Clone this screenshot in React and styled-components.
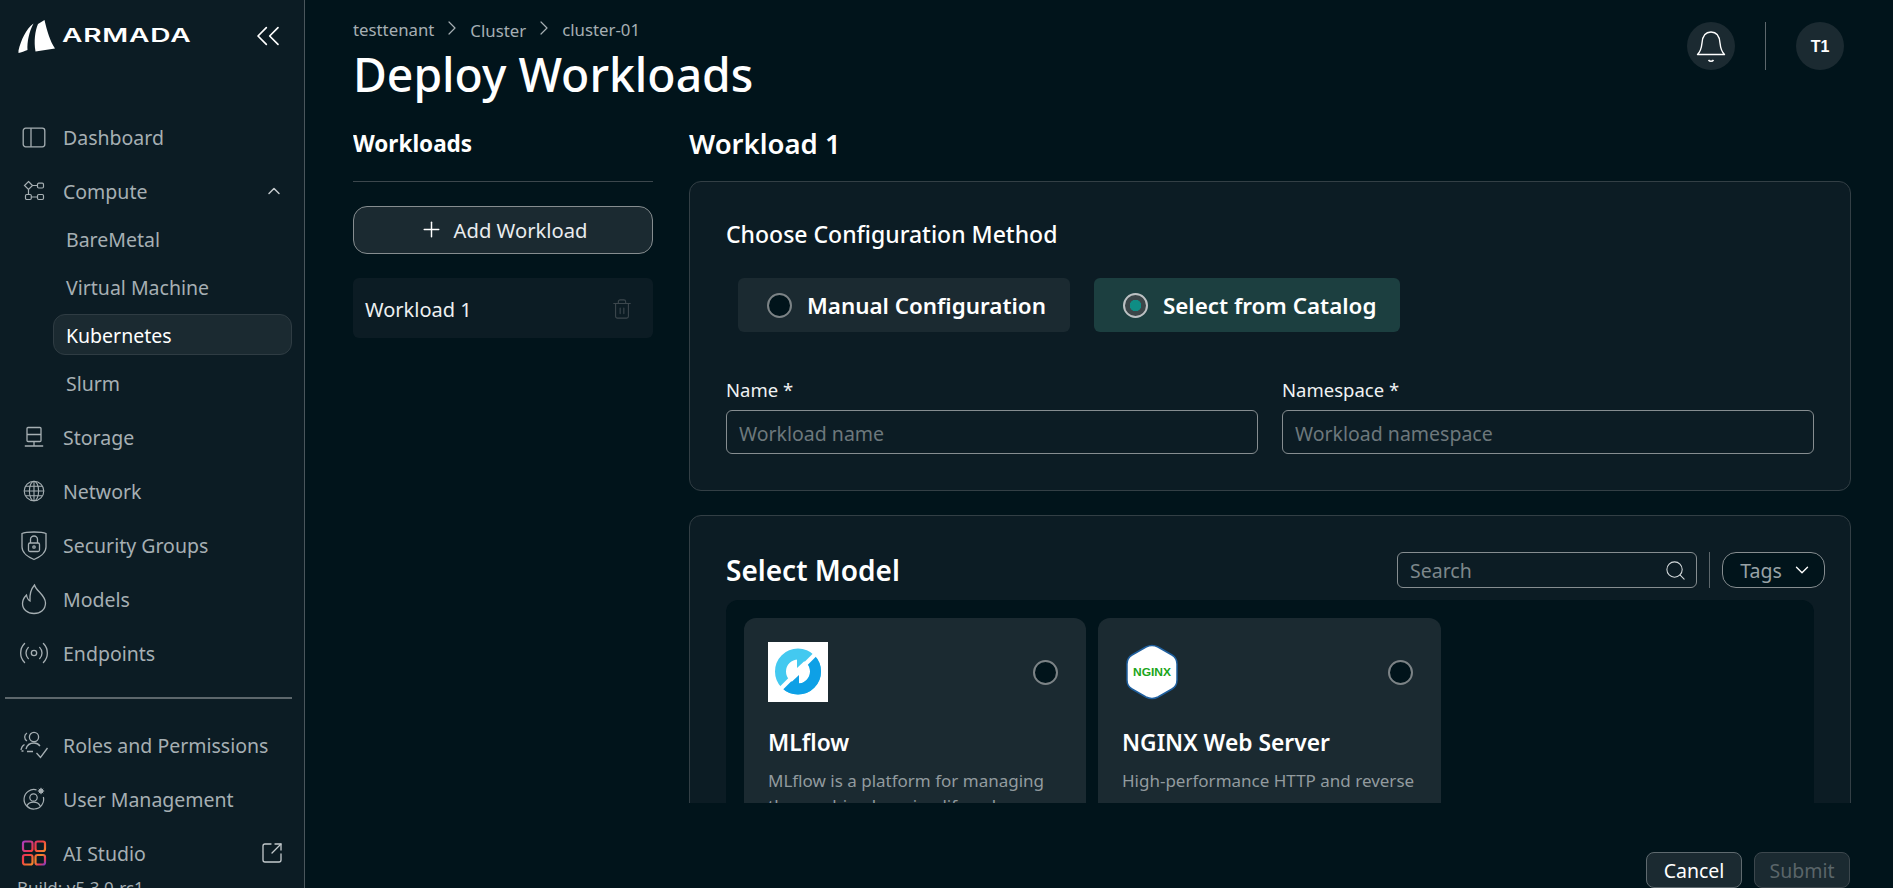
import React from "react";
import styled, { createGlobalStyle } from "styled-components";
import {
  ChevronRight,
  ChevronUp,
  ChevronDown,
  ChevronsLeft,
  Plus,
  Trash2,
  Search,
  Radio,
  SquareArrowOutUpRight,
} from "lucide-react";

const Global = createGlobalStyle`
  html, body {
    margin: 0;
    height: 100%;
    background: #01141b;
    overflow: hidden;
  }
  * {
    box-sizing: border-box;
  }
  body {
    font-family: "Noto Sans", "Open Sans", sans-serif;
    color: #fff;
  }
`;

const PanelIcon = () => (
  <svg width="24" height="21" viewBox="0 0 24 21" fill="none" stroke="currentColor" strokeWidth="1.3">
    <rect x="1.2" y="1.2" width="21.6" height="18.6" rx="2.5" />
    <path d="M9 1.2v18.6" />
  </svg>
);

const ComputeIcon = () => (
  <svg width="24" height="24" viewBox="0 0 24 24" fill="none" stroke="currentColor" strokeWidth="1.2">
    <path d="M6.5 2.500 10.500 6.500 6.500 10.500 2.500 6.500Z" />
    <rect x="15.500" y="4.200" width="6" height="4.800" rx="1.200" />
    <rect x="3.500" y="15.500" width="5.800" height="5" rx="1.200" />
    <rect x="15.500" y="15.500" width="6" height="5" rx="1.200" />
    <path d="M10.500 6.500H15.500M6.500 10.500V15.500M9.300 18H15.500" />
  </svg>
);

const StorageIcon = () => (
  <svg width="24" height="24" viewBox="0 0 24 24" fill="none" stroke="currentColor" strokeWidth="1.3">
    <rect x="5" y="2.500" width="14" height="14" rx="1" />
    <path d="M5 9.500h14M12 16.500v4.500M2.800 21h18.400" />
  </svg>
);

const GlobeIcon = () => (
  <svg width="24" height="24" viewBox="0 0 24 24" fill="none" stroke="currentColor" strokeWidth="1.1">
    <circle cx="12" cy="12" r="9.800" />
    <ellipse cx="12" cy="12" rx="4.600" ry="9.800" />
    <path d="M12 2.200v19.600M2.200 12h19.600M3.500 7.200h17M3.500 16.800h17" />
  </svg>
);

const ShieldIcon = () => (
  <svg width="28" height="32" viewBox="0 0 28 32" fill="none" stroke="currentColor" strokeWidth="1.3">
    <path d="M2 4.500C6 2.500 22 2.500 26 4.500V18C26 24 19 28.500 14 30.500 9 28.500 2 24 2 18Z" />
    <rect x="8.500" y="14" width="11" height="8.500" rx="1.500" />
    <path d="M10.500 14v-3.500a3.500 3.500 0 0 1 7 0V14" />
    <circle cx="14" cy="18" r="1.200" />
  </svg>
);

const FlameIcon = () => (
  <svg width="26" height="32" viewBox="0 0 26 32" fill="none" stroke="currentColor" strokeWidth="1.3">
    <path d="M13.500 2C15 8 24.500 12 24.500 20 24.500 26.500 19.500 30.500 13 30.500 6.500 30.500 1.500 26.500 1.500 20.500 1.500 16.500 3.500 14 5.500 12 6 15 7 17 9 18 8.500 12 10 6 13.500 2Z" />
  </svg>
);

const RolesIcon = () => (
  <svg width="30" height="30" viewBox="0 0 30 30" fill="none" stroke="currentColor" strokeWidth="1.3">
    <circle cx="15" cy="7" r="4.600" />
    <path d="M8 3a4.600 4.600 0 0 0 0 8" />
    <path d="M7 19c1-4 4-6 8-6 2.500 0 4.500 1 6 3" />
    <path d="M2 20c.4-2.500 1.600-4.500 3.500-5.500" />
    <path d="M2.500 21h2M8 21.500h6" />
    <path d="M17.500 23l4 4.500 7-9.500" />
  </svg>
);

const UserGearIcon = () => (
  <svg width="24" height="24" viewBox="0 0 24 24" fill="none" stroke="currentColor" strokeWidth="1.2">
    <path d="M14.500 2.800A9.800 9.800 0 1 0 21.400 10" />
    <circle cx="11.500" cy="10.500" r="3.700" />
    <path d="M4.800 19c1.300-2.600 3.800-3.800 6.700-3.800s5.400 1.200 6.700 3.800" />
    <circle cx="19" cy="4" r="1.800" fill="currentColor" />
    <path d="M19 .8v6.400M15.800 4h6.400M16.800 1.800l4.400 4.400M21.200 1.800l-4.400 4.400" strokeWidth="1" />
  </svg>
);

const StudioIcon = () => (
  <svg width="26" height="26" viewBox="0 0 26 26" fill="none" strokeWidth="2.200">
    <defs>
      <linearGradient id="studioGrad" gradientUnits="userSpaceOnUse" x1="1" y1="1" x2="25" y2="25">
        <stop offset="0" stopColor="#a23cc8" />
        <stop offset="0.4" stopColor="#f03a44" />
        <stop offset="0.7" stopColor="#f4882c" />
        <stop offset="0.85" stopColor="#e83a5c" />
        <stop offset="1" stopColor="#6a3ed8" />
      </linearGradient>
    </defs>
    <g stroke="url(#studioGrad)">
      <rect x="2" y="1.500" width="9.500" height="9.500" rx="2" />
      <rect x="14.500" y="1.500" width="9.500" height="9.500" rx="2" />
      <rect x="2" y="15" width="9.500" height="9.500" rx="2" />
      <rect x="14.500" y="15" width="9.500" height="9.500" rx="2" />
    </g>
  </svg>
);

const SailIcon = () => (
  <svg width="38" height="34" viewBox="0 0 38 34" fill="#fff">
    <path d="M15.500 3.500C8 9 3 20 0.500 30.500L0.500 33C3 32.500 7 31 9.500 30C9 22 11 12 15.500 3.500Z" />
    <path d="M26.500 0C29 11 32 21 37 28.500L17.500 31.500C15.800 21 17 11 20 4Z" />
  </svg>
);

const BellIcon = () => (
  <svg width="30" height="34" viewBox="0 0 30 34" fill="none" stroke="#fff" strokeWidth="1.400">
    <path d="M1.500 24.500C4 22 5.500 18 6 13 6.500 6 10 2 15 2S23.500 6 24 13C24.500 18 26 22 28.500 24.500Z" strokeLinejoin="round" />
    <path d="M12.500 30c1.200 1.600 3.800 1.600 5 0" strokeWidth="1.600" />
  </svg>
);

const MlflowLogo = () => (
  <svg width="60" height="60" viewBox="0 0 60 60">
    <rect width="60" height="60" fill="#fff" />
    <circle cx="30" cy="29.500" r="17.500" fill="none" stroke="#43c9f0" strokeWidth="11" />
    <path d="M42.400 17.100A17.500 17.500 0 0 1 17.600 41.900" fill="none" stroke="#0ea0e6" strokeWidth="11" />
    <path d="M29 9V26L44 12Z" fill="#43c9f0" />
    <path d="M31 50V33L16 47Z" fill="#0ea0e6" />
    <path d="M52 7.500 8 51.500" stroke="#fff" strokeWidth="4.500" fill="none" />
  </svg>
);

const NginxLogo = () => (
  <svg width="54" height="58" viewBox="0 0 54 58">
    <path
      d="M21 4Q27 1 33 4L47 12Q52 15 52 21V37Q52 43 47 46L33 54Q27 57 21 54L7 46Q2 43 2 37V21Q2 15 7 12Z"
      fill="#fff"
      stroke="#1f5f9e"
      strokeWidth="1.500"
    />
    <text
      x="27"
      y="33"
      textAnchor="middle"
      textLength="38"
      lengthAdjust="spacingAndGlyphs"
      fontFamily="'Liberation Sans', sans-serif"
      fontSize="11"
      fontWeight="700"
      fill="#1aa51a"
    >
      NGINX
    </text>
  </svg>
);

const navTop = [{ label: "Dashboard", icon: <PanelIcon /> }];
const navMid = [
  { label: "Storage", icon: <StorageIcon /> },
  { label: "Network", icon: <GlobeIcon /> },
  { label: "Security Groups", icon: <ShieldIcon /> },
  { label: "Models", icon: <FlameIcon /> },
  { label: "Endpoints", icon: <Radio size={36} strokeWidth={1} /> },
];
const subItems = ["BareMetal", "Virtual Machine", "Kubernetes", "Slurm"];

export default function App() {
  return (
    <Shell>
      <Global />
      <Sidebar>
        <Brand>
          <SailIcon />
          <BrandName>ARMADA</BrandName>
          <Collapse>
            <ChevronsLeft size={40} strokeWidth={1} />
          </Collapse>
        </Brand>
        <Nav>
          {navTop.map((n) => (
            <NavItem key={n.label}>
              <NavIcon>{n.icon}</NavIcon>
              {n.label}
            </NavItem>
          ))}
          <NavItem>
            <NavIcon>
              <ComputeIcon />
            </NavIcon>
            Compute
            <NavTail>
              <ChevronUp size={20} strokeWidth={1.8} />
            </NavTail>
          </NavItem>
          <SubList>
            {subItems.map((s) => (
              <SubItem key={s} $active={s === "Kubernetes"}>
                <SubLabel $active={s === "Kubernetes"}>{s}</SubLabel>
              </SubItem>
            ))}
          </SubList>
          {navMid.map((n) => (
            <NavItem key={n.label}>
              <NavIcon>{n.icon}</NavIcon>
              {n.label}
            </NavItem>
          ))}
        </Nav>
        <NavDivider />
        <Nav>
          <NavItem>
            <NavIcon>
              <RolesIcon />
            </NavIcon>
            Roles and Permissions
          </NavItem>
          <NavItem>
            <NavIcon>
              <UserGearIcon />
            </NavIcon>
            User Management
          </NavItem>
          <NavItem>
            <NavIcon>
              <StudioIcon />
            </NavIcon>
            AI Studio
            <NavTail>
              <SquareArrowOutUpRight size={24} strokeWidth={1.3} />
            </NavTail>
          </NavItem>
        </Nav>
        <Build>Build: v5.3.0-rc1</Build>
      </Sidebar>

      <Main>
        <TopBar>
          <div>
            <Crumbs>
              <Crumb>testtenant</Crumb>
              <ChevronRight size={24} strokeWidth={1.2} />
              <Crumb $low>Cluster</Crumb>
              <ChevronRight size={24} strokeWidth={1.2} />
              <Crumb>cluster-01</Crumb>
            </Crumbs>
            <Title>Deploy Workloads</Title>
          </div>
          <TopActions>
            <RoundButton>
              <BellIcon />
            </RoundButton>
            <TopDivider />
            <RoundButton>T1</RoundButton>
          </TopActions>
        </TopBar>

        <Columns>
          <LeftColumn>
            <LeftHeading>Workloads</LeftHeading>
            <AddButton>
              <Plus size={25} strokeWidth={1.4} />
              Add Workload
            </AddButton>
            <WorkloadRow>
              Workload 1
              <TrashWrap>
                <Trash2 size={22} strokeWidth={1.2} />
              </TrashWrap>
            </WorkloadRow>
          </LeftColumn>

          <RightColumn>
            <RightHeading>Workload 1</RightHeading>
            <Card>
              <CardTitle>Choose Configuration Method</CardTitle>
              <MethodRow>
                <MethodOption>
                  <RadioDot />
                  <MethodLabel>Manual Configuration</MethodLabel>
                </MethodOption>
                <MethodOption $selected>
                  <RadioDot $selected />
                  <MethodLabel>Select from Catalog</MethodLabel>
                </MethodOption>
              </MethodRow>
              <FieldGrid>
                <Field>
                  <FieldLabel>Name *</FieldLabel>
                  <TextInput placeholder="Workload name" />
                </Field>
                <Field>
                  <FieldLabel>Namespace *</FieldLabel>
                  <TextInput placeholder="Workload namespace" />
                </Field>
              </FieldGrid>
            </Card>
            <ModelCard>
              <ModelHeader>
                <ModelTitle>Select Model</ModelTitle>
                <ModelTools>
                  <SearchBox>
                    <SearchInput placeholder="Search" />
                    <Search size={23} strokeWidth={1.1} color="#d5dadc" />
                  </SearchBox>
                  <ToolDivider />
                  <TagsButton>
                    Tags
                    <ChevronDown size={22} strokeWidth={1.5} color="#fff" />
                  </TagsButton>
                </ModelTools>
              </ModelHeader>
              <ModelGrid>
                <ModelItem>
                  <ModelTop>
                    <MlflowLogo />
                    <RadioDot />
                  </ModelTop>
                  <ModelName>MLflow</ModelName>
                  <ModelDesc>MLflow is a platform for managing the machine learning lifecycle</ModelDesc>
                </ModelItem>
                <ModelItem>
                  <ModelTop $inset>
                    <NginxLogo />
                    <RadioDot />
                  </ModelTop>
                  <ModelName>NGINX Web Server</ModelName>
                  <ModelDesc>High-performance HTTP and reverse proxy server</ModelDesc>
                </ModelItem>
              </ModelGrid>
            </ModelCard>
          </RightColumn>
        </Columns>

        <Footer>
          <FooterButton>Cancel</FooterButton>
          <FooterButton disabled>Submit</FooterButton>
        </Footer>
      </Main>
    </Shell>
  );
}

const Shell = styled.div`
  display: flex;
  width: 1893px;
  height: 888px;
  overflow: hidden;
`;

const Sidebar = styled.aside`
  width: 305px;
  flex: none;
  height: 888px;
  overflow: hidden;
  background: #0c1c24;
  border-right: 1px solid #4a565c;
  display: flex;
  flex-direction: column;
`;

const Brand = styled.div`
  height: 110px;
  flex: none;
  padding: 20px 16px 0 18px;
  display: flex;
  align-items: flex-start;
`;

const BrandName = styled.span`
  font-family: "Inter", sans-serif;
  font-weight: 600;
  font-size: 18px;
  line-height: 30px;
  letter-spacing: 0.5px;
  margin: 1px 0 0 6px;
  transform: scaleX(1.56);
  transform-origin: left center;
`;

const Collapse = styled.span`
  margin-left: auto;
  margin-top: -4px;
  display: flex;
`;

const Nav = styled.nav`
  display: flex;
  flex-direction: column;
`;

const NavItem = styled.div`
  height: 54px;
  flex: none;
  display: flex;
  align-items: center;
  padding: 0 20px 0 18px;
  font-size: 19.5px;
  color: #a6afb3;
`;

const NavIcon = styled.span`
  width: 32px;
  height: 34px;
  margin-right: 13px;
  flex: none;
  display: flex;
  align-items: center;
  justify-content: center;
`;

const NavTail = styled.span`
  margin-left: auto;
  display: flex;
  color: #c4cacd;
`;

const SubList = styled.div`
  display: flex;
  flex-direction: column;
  margin: -4px 0 4px;
`;

const SubItem = styled.div`
  height: 48px;
  flex: none;
  padding-left: 53px;
  padding-right: 12px;
  display: flex;
  align-items: center;
`;

const SubLabel = styled.span`
  width: 100%;
  height: 41px;
  display: flex;
  align-items: center;
  padding: 2px 0 0 12px;
  font-size: 19.5px;
  border-radius: 12px;
  color: ${(p) => (p.$active ? "#fff" : "#a6afb3")};
  background: ${(p) => (p.$active ? "#1b2a31" : "transparent")};
  border: 1px solid ${(p) => (p.$active ? "#2f3c43" : "transparent")};
`;

const NavDivider = styled.hr`
  margin: 17px 12px 19px 5px;
  border: none;
  border-top: 2px solid #5d676c;
  flex: none;
`;

const Build = styled.div`
  font-size: 17px;
  color: #a6afb3;
  padding-left: 17px;
  margin-top: -4px;
`;

const Main = styled.main`
  flex: 1;
  min-width: 0;
  height: 888px;
  padding: 0 42px 0 48px;
  display: flex;
  flex-direction: column;
`;

const TopBar = styled.header`
  height: 120px;
  flex: none;
  padding-top: 16px;
  display: flex;
  justify-content: space-between;
`;

const Crumbs = styled.div`
  display: flex;
  align-items: center;
  gap: 6px;
  height: 26px;
  color: #a6afb3;
  font-size: 16.8px;

  svg {
    margin-top: -2px;
  }
`;

const Crumb = styled.span`
  position: relative;
  top: ${(p) => (p.$low ? "1px" : "0")};
`;

const Title = styled.h1`
  margin: 4px 0 0;
  font-size: 46.3px;
  font-weight: 500;
  line-height: 58px;
`;

const TopActions = styled.div`
  display: flex;
  align-items: flex-start;
  margin-top: 6px;
  margin-right: 7px;
`;

const RoundButton = styled.div`
  width: 48px;
  height: 48px;
  padding-top: 1px;
  border-radius: 50%;
  background: #1b2a31;
  display: flex;
  align-items: center;
  justify-content: center;
  font-family: "Liberation Sans", sans-serif;
  font-weight: 700;
  font-size: 16px;
`;

const TopDivider = styled.div`
  width: 1px;
  height: 48px;
  background: #5d676c;
  margin: 0 30px;
`;

const Columns = styled.div`
  flex: none;
  height: 683px;
  display: grid;
  grid-template-columns: 300px 1fr;
  column-gap: 36px;
  overflow: hidden;
`;

const LeftColumn = styled.section`
  display: flex;
  flex-direction: column;
`;

const LeftHeading = styled.h2`
  margin: 0;
  height: 62px;
  border-bottom: 1px solid #3c474d;
  font-size: 22.5px;
  font-weight: 700;
  line-height: 48px;
`;

const AddButton = styled.button`
  height: 48px;
  margin-top: 24px;
  padding: 0 0 1px;
  background: #1b2a31;
  border: 1px solid #868d90;
  border-radius: 14px;
  color: #e9ecee;
  font: inherit;
  font-size: 20.2px;
  display: flex;
  align-items: center;
  justify-content: center;
  gap: 10px;

  svg {
    color: #fff;
  }
`;

const WorkloadRow = styled.div`
  height: 60px;
  margin-top: 24px;
  padding: 2px 20px 0 12px;
  background: #0c1c24;
  border-radius: 6px;
  display: flex;
  align-items: center;
  justify-content: space-between;
  font-size: 20px;
  color: #eef0f1;
`;

const TrashWrap = styled.span`
  display: flex;
  color: #3c474d;
`;

const RightColumn = styled.section`
  min-width: 0;
  display: flex;
  flex-direction: column;
`;

const RightHeading = styled.h2`
  margin: 0;
  height: 61px;
  font-size: 27.5px;
  font-weight: 600;
  line-height: 47px;
  flex: none;
`;

const Card = styled.div`
  flex: none;
  background: #0c1c24;
  border: 1px solid #333f45;
  border-radius: 12px;
  padding: 36px 36px 36px;
`;

const CardTitle = styled.h3`
  margin: 0;
  height: 60px;
  font-size: 23px;
  font-weight: 500;
  line-height: 32px;
`;

const MethodRow = styled.div`
  display: flex;
  gap: 24px;
  padding-left: 12px;
`;

const MethodOption = styled.div`
  height: 54px;
  padding: 0 24px 0 29px;
  border-radius: 6px;
  background: ${(p) => (p.$selected ? "#1c3f40" : "#1b2a31")};
  display: flex;
  align-items: center;
  gap: 15px;
  font-size: 22.4px;
  font-weight: 600;
`;

const MethodLabel = styled.span`
  padding-top: 1px;
`;

const RadioDot = styled.span`
  width: 25px;
  height: 25px;
  flex: none;
  border-radius: 50%;
  border: 2.5px solid ${(p) => (p.$selected ? "#bcc1c3" : "#7c8386")};
  background: ${(p) => (p.$selected ? "radial-gradient(circle, #0f8d84 0 5.5px, #3b4649 6px)" : "#01141b")};
`;

const FieldGrid = styled.div`
  margin-top: 43px;
  display: grid;
  grid-template-columns: 1fr 1fr;
  column-gap: 24px;
`;

const Field = styled.label`
  display: flex;
  flex-direction: column;
`;

const FieldLabel = styled.span`
  font-size: 18.5px;
  line-height: 30px;
  height: 35px;
  color: #f0f2f3;
`;

const TextInput = styled.input`
  height: 44px;
  border: 1px solid #868d90;
  border-radius: 6px;
  background: transparent;
  padding: 2px 12px 0;
  font: inherit;
  font-size: 19.5px;
  color: #fff;

  &::placeholder {
    color: #6d787c;
    opacity: 1;
  }
`;

const ModelCard = styled.div`
  flex: none;
  margin-top: 24px;
  background: #0c1c24;
  border: 1px solid #333f45;
  border-radius: 12px;
  padding: 30px 24px 0 36px;
`;

const ModelHeader = styled.div`
  display: flex;
  justify-content: space-between;
  align-items: center;
  height: 48px;
`;

const ModelTitle = styled.h3`
  margin: 0;
  font-size: 28px;
  font-weight: 600;
`;

const ModelTools = styled.div`
  display: flex;
  align-items: center;
  gap: 12px;
  margin-right: 1px;
`;

const SearchBox = styled.div`
  width: 300px;
  height: 36px;
  border: 1px solid #868d90;
  border-radius: 6px;
  padding: 0 9px 0 12px;
  display: flex;
  align-items: center;
`;

const SearchInput = styled.input`
  flex: 1;
  min-width: 0;
  background: transparent;
  border: none;
  outline: none;
  padding: 0;
  font: inherit;
  font-size: 19.5px;
  color: #fff;

  &::placeholder {
    color: #7d878b;
    opacity: 1;
  }
`;

const ToolDivider = styled.div`
  width: 1px;
  height: 36px;
  background: #5d676c;
`;

const TagsButton = styled.button`
  width: 103px;
  height: 36px;
  border: 1px solid #868d90;
  border-radius: 14px;
  background: #01141b;
  color: #98a2a6;
  font: inherit;
  font-size: 19.5px;
  padding: 0 0 0 6px;
  display: flex;
  align-items: center;
  justify-content: center;
  gap: 9px;
`;

const ModelGrid = styled.div`
  margin-top: 6px;
  margin-right: 12px;
  padding: 18px;
  height: 340px;
  background: #01141b;
  border-radius: 12px 12px 0 0;
  display: grid;
  grid-template-columns: 342px 343px;
  column-gap: 12px;
  justify-content: start;
`;

const ModelItem = styled.article`
  background: #1b2a31;
  border-radius: 12px;
  padding: 24px;
`;

const ModelTop = styled.div`
  display: flex;
  justify-content: space-between;
  align-items: center;
  height: 60px;
  padding-right: 4px;
  padding-left: ${(p) => (p.$inset ? "3px" : "0")};
`;

const ModelName = styled.h4`
  margin: 24px 0 0;
  font-size: 22.8px;
  font-weight: 600;
  line-height: 34px;
`;

const ModelDesc = styled.p`
  margin: 8px 0 0;
  font-size: 17px;
  line-height: 25px;
  color: #929b9f;
`;

const Footer = styled.footer`
  margin: 49px 1px 0 0;
  display: flex;
  justify-content: flex-end;
  gap: 12px;
`;

const FooterButton = styled.button`
  width: 96px;
  height: 36px;
  border: 1px solid #5f6a6f;
  border-radius: 8px;
  background: #1b2a31;
  color: #fff;
  font: inherit;
  font-size: 19.5px;
  padding: 0;

  &:disabled {
    color: #5a6569;
    border-color: #3c474d;
  }
`;
